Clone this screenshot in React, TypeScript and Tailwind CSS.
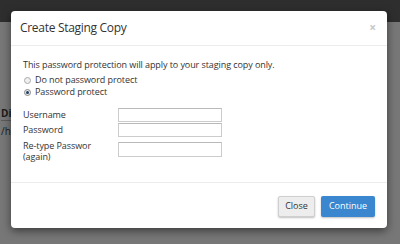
import React from "react";

export default function App() {
  const font = { fontFamily: '"Open Sans", "Noto Sans", sans-serif' };
  return (
    <div className="relative w-[400px] h-[244px] overflow-hidden bg-[#777777]" style={font}>
      <div className="h-[22px] bg-[#2e2e2e]" />
      <div className="flex flex-col pt-[84px] pl-[1px] text-[10px] text-[#1a1a1a]">
        <div className="h-[14px] font-bold leading-[14px]">Di</div>
        <div className="h-px w-[12px] bg-[#5a5a5a]" />
        <div className="pt-[3px] leading-[14px]">/hc</div>
      </div>

      <div className="absolute left-[11px] top-[11px] w-[376px] h-[217px] bg-white rounded-[4px] shadow-[0_3px_9px_rgba(0,0,0,0.5)] flex flex-col">
        <div className="h-[35px] flex items-center justify-between pl-[9px] pr-[11px] border-b border-[#ececec]">
          <span className="text-[12px] tracking-[-0.3px] text-[#333333] leading-none">Create Staging Copy</span>
          <span className="text-[12px] text-[#c8c8c8] leading-none font-bold">×</span>
        </div>
        <div className="flex-1 pt-[12px] pl-[12px] text-[9px] tracking-[-0.08px] text-[#333333] leading-[12px]">
          <div className="h-[13px] leading-[13px]">This password protection will apply to your staging copy only.</div>
          <div className="flex items-center h-[12px] mt-[3px]">
            <span className="w-[7px] h-[7px] rounded-full border border-[#aaaaaa] bg-[#f0f0f0] ml-[1px] mr-[4px]" />
            <span className="leading-[12px]">Do not password protect</span>
          </div>
          <div className="flex items-center h-[12px]">
            <span className="w-[7px] h-[7px] rounded-full border border-[#8a8a8a] bg-[#e8e8e8] ml-[1px] mr-[4px] flex items-center justify-center">
              <span className="w-[3px] h-[3px] rounded-full bg-[#1f3f66]" />
            </span>
            <span className="leading-[12px]">Password protect</span>
          </div>
          <div className="mt-[10px] flex flex-col gap-[1px]">
            <div className="flex items-center h-[14px]">
              <span className="w-[95px]">Username</span>
              <span className="w-[104px] h-[14px] border border-[#cccccc] border-t-[#b9b9b9]" />
            </div>
            <div className="flex items-center h-[14px]">
              <span className="w-[95px]">Password</span>
              <span className="w-[104px] h-[14px] border border-[#cccccc] border-t-[#b9b9b9]" />
            </div>
            <div className="flex items-start mt-[4px]">
              <span className="w-[95px] -mt-[1px] leading-[10.5px]">
                Re-type Passwor
                <br />
                (again)
              </span>
              <span className="w-[104px] h-[15px] border border-[#cccccc] border-t-[#b9b9b9]" />
            </div>
          </div>
        </div>
        <div className="h-[46px] border-t border-[#ececec] flex items-center justify-end gap-[6px] pr-[12px] pt-[1px]">
          <button className="w-[37px] h-[21px] rounded-[2px] border border-[#cfcfcf] bg-[#ededed] text-[9px] text-[#333333] shadow-[0_1px_2px_rgba(0,0,0,0.25)]">Close</button>
          <button className="w-[54px] h-[21px] rounded-[2px] bg-[#3a86cf] text-[9px] text-white shadow-[0_1px_2px_rgba(0,0,0,0.25)]">Continue</button>
        </div>
      </div>
    </div>
  );
}
